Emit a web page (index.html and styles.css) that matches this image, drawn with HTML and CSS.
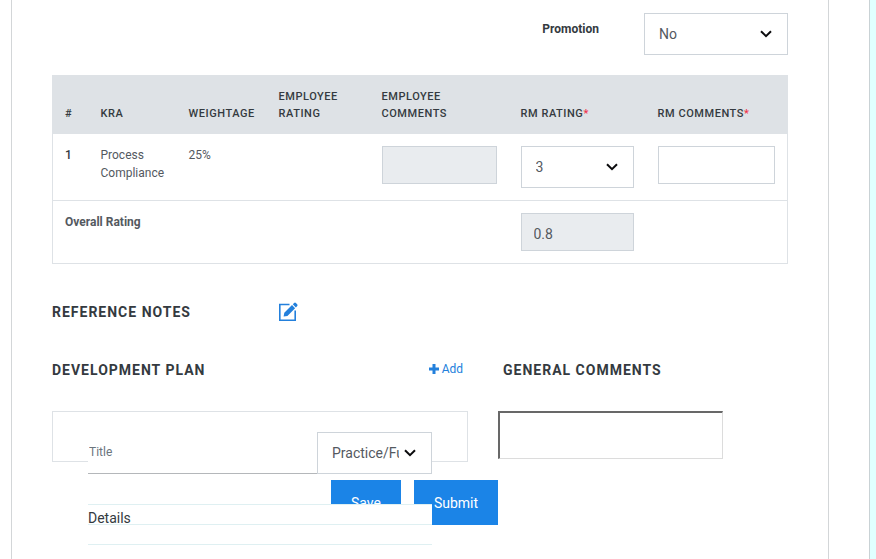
FILE: index.html
```html
<!DOCTYPE html>
<html lang="en">
<head>
<meta charset="utf-8">
<title>Performance Review</title>
<link rel="stylesheet" href="styles.css">
</head>
<body>
<div class="page">
  <main class="card">
    <form class="review">
      <div class="promotion">
        <label class="promotion-label" for="promotion">Promotion</label>
        <span class="select promotion-select">
          <select id="promotion"><option>No</option><option>Yes</option></select>
          <svg class="chevron" viewBox="0 0 12 8" aria-hidden="true"><path d="M1 1.2 6 6.2 11 1.2"/></svg>
        </span>
      </div>

      <table class="ratings">
        <colgroup>
          <col class="col-index"><col class="col-kra"><col class="col-weight"><col class="col-emp-rating"><col class="col-emp-comments"><col class="col-rm-rating"><col>
        </colgroup>
        <thead>
          <tr>
            <th scope="col">#</th>
            <th scope="col">KRA</th>
            <th scope="col">Weightage</th>
            <th scope="col">Employee Rating</th>
            <th scope="col">Employee Comments</th>
            <th scope="col">RM Rating<span class="required">*</span></th>
            <th scope="col">RM Comments<span class="required">*</span></th>
          </tr>
        </thead>
        <tbody>
          <tr>
            <th scope="row">1</th>
            <td>Process Compliance</td>
            <td>25%</td>
            <td></td>
            <td><input class="field" type="text" aria-label="Employee comments" disabled></td>
            <td>
              <span class="select">
                <select aria-label="RM rating"><option>3</option></select>
                <svg class="chevron" viewBox="0 0 12 8" aria-hidden="true"><path d="M1 1.2 6 6.2 11 1.2"/></svg>
              </span>
            </td>
            <td><input class="field" type="text" aria-label="RM comments"></td>
          </tr>
          <tr>
            <td class="overall" colspan="5">Overall Rating</td>
            <td><input class="field" type="text" aria-label="Overall rating" value="0.8" disabled></td>
            <td></td>
          </tr>
        </tbody>
      </table>

      <div class="notes">
        <h2>Reference Notes</h2>
        <button class="icon-button" type="button" aria-label="Edit reference notes">
          <svg viewBox="0 0 20 20" aria-hidden="true">
            <path class="box" d="M11.5 2.5H1.8V18.2H17.2V8.5"/>
            <path class="pen" d="M5.6 14.6 6.3 10.8 14 3.1 17.1 6.2 9.4 13.9ZM14.8 2.3 16.1 1Q17 .2 17.9 1L19.2 2.3Q20 3.2 19.2 4.1L17.9 5.4Z"/>
          </svg>
        </button>
      </div>

      <div class="columns">
        <section class="plan">
          <header class="plan-head">
            <h2>Development Plan</h2>
            <a class="add" href="#plan"><svg viewBox="0 0 10 10" aria-hidden="true"><path d="M3.5 0h3v3.5H10v3H6.5V10h-3V6.5H0v-3h3.5z"/></svg>Add</a>
          </header>
          <div class="plan-box" id="plan">
            <div class="entry">
              <div class="entry-row">
                <input class="title" type="text" placeholder="Title" aria-label="Title">
                <span class="select category">
                  <select aria-label="Category"><option>Practice/Function</option></select>
                  <svg class="chevron" viewBox="0 0 12 8" aria-hidden="true"><path d="M1 1.2 6 6.2 11 1.2"/></svg>
                </span>
              </div>
              <textarea class="details" placeholder="Details" aria-label="Details"></textarea>
            </div>
          </div>
        </section>
        <section class="general">
          <h2 id="general-title">General Comments</h2>
          <textarea class="general-text" aria-labelledby="general-title"></textarea>
        </section>
      </div>

      <div class="actions">
        <button class="button" type="button">Save</button>
        <button class="button" type="submit">Submit</button>
      </div>
    </form>
  </main>
</div>
</body>
</html>
```
FILE: styles.css
```css
* {
  box-sizing: border-box;
}

body {
  margin: 0;
  background: #e0ffff;
  color: #54595f;
  font: 12px/18px Roboto, sans-serif;
  overflow: hidden;
}

.page {
  display: flex;
  min-height: 100vh;
  margin-right: 6px;
  padding: 0 40px 0 11px;
  border-right: 1px solid #c9d2d5;
  background: #fff;
}

.card {
  flex: 1;
  padding: 13px 40px 0;
  border: solid #d3d6d8;
  border-width: 0 1px;
}

input,
select,
textarea,
button {
  margin: 0;
  border-radius: 0;
  font-family: inherit;
  color: inherit;
}

h2 {
  margin: 0;
  color: #343a40;
  font-size: 14px;
  font-weight: 700;
  line-height: 20px;
  letter-spacing: 1px;
  text-transform: uppercase;
}

.promotion {
  display: flex;
  justify-content: flex-end;
  gap: 45px;
  margin-bottom: 20px;
}

.promotion-label {
  padding-top: 7px;
  color: #343a40;
  font-weight: 700;
}

.select {
  position: relative;
  display: block;
}

.select select {
  display: block;
  width: 100%;
  height: 42px;
  padding: 0 32px 0 14px;
  border: 1px solid #ced4da;
  background: #fff;
  font-size: 14px;
  appearance: none;
}

.promotion-select {
  width: 144px;
}

.chevron {
  position: absolute;
  top: 17px;
  right: 16px;
  width: 12px;
  height: 8px;
  fill: none;
  stroke: #0b0b0d;
  stroke-width: 2;
  pointer-events: none;
}

.ratings {
  width: 100%;
  table-layout: fixed;
  border-collapse: collapse;
  border: 1px solid #dee2e6;
}

.col-index { width: 36px; }
.col-kra { width: 88px; }
.col-weight { width: 90px; }
.col-emp-rating { width: 103px; }
.col-emp-comments { width: 139px; }
.col-rm-rating { width: 137px; }

.ratings th,
.ratings td {
  padding: 12px;
  text-align: left;
  vertical-align: top;
}

.ratings thead th {
  background: #dee2e6;
  color: #343a40;
  font-size: 11px;
  font-weight: 500;
  line-height: 17px;
  letter-spacing: 0.05em;
  text-transform: uppercase;
  vertical-align: bottom;
}

.ratings tbody tr + tr {
  border-top: 1px solid #dee2e6;
}

.ratings tbody th {
  color: #343a40;
  font-weight: 500;
}

.ratings .overall {
  font-weight: 700;
}

.required {
  color: #f0324b;
}

.field {
  display: block;
  width: 100%;
  height: 38px;
  padding: 4px 12px 0;
  border: 1px solid #ced4da;
  background: #fff;
  font-size: 14px;
}

.field:disabled {
  background: #e9ecef;
}

.notes {
  display: flex;
  align-items: center;
  margin-top: 38px;
}

.notes h2 {
  width: 226px;
}

.icon-button {
  width: 20px;
  height: 20px;
  padding: 0;
  border: 0;
  background: none;
}

.icon-button svg {
  display: block;
}

.box {
  fill: none;
  stroke: #2380dc;
  stroke-width: 1.6;
}

.pen {
  fill: #2380dc;
}

.columns {
  display: grid;
  grid-template-columns: 416px 1fr;
  gap: 30px;
  margin-top: 38px;
}

.plan-head {
  display: flex;
  justify-content: space-between;
  padding-right: 5px;
}

.add {
  display: flex;
  align-items: center;
  gap: 3px;
  height: 18px;
  color: #2380dc;
  text-decoration: none;
}

.add svg {
  width: 10px;
  height: 10px;
  fill: currentColor;
}

.plan-box {
  height: 51px;
  margin-top: 31px;
  padding: 20px 35px 0;
  border: 1px solid #dee2e6;
}

.entry {
  position: relative;
  z-index: 1;
}

.entry-row {
  display: flex;
}

.title {
  flex: 1;
  min-width: 0;
  height: 42px;
  padding: 0 1px 2px;
  border: 0;
  border-bottom: 1px solid #b4b7ba;
  background: #fff;
  font-size: 12px;
}

.title::placeholder {
  color: #6c757d;
}

.category {
  width: 115px;
}

.details {
  display: block;
  width: 100%;
  height: 80px;
  margin-top: 30px;
  padding: 4px 0 0;
  border: 0;
  background: repeating-linear-gradient(#dff0f2 0 1px, #fff 1px 20px);
  font-size: 14px;
  line-height: 20px;
  resize: none;
}

.details::placeholder {
  color: #343a40;
}

.general h2 {
  padding-left: 5px;
}

.general-text {
  display: block;
  width: 225px;
  height: 48px;
  margin-top: 31px;
  border: solid;
  border-width: 2px 1px 1px 2px;
  border-color: #686868 #dcdcdc #dcdcdc #686868;
  background: #fff;
  resize: none;
}

.actions {
  display: flex;
  justify-content: center;
  gap: 13px;
  margin: 18px 11px 0 0;
}

.button {
  height: 45px;
  padding: 0 20px;
  border: 0;
  background: #1b84e7;
  color: #fff;
  font-size: 14px;
}
```
